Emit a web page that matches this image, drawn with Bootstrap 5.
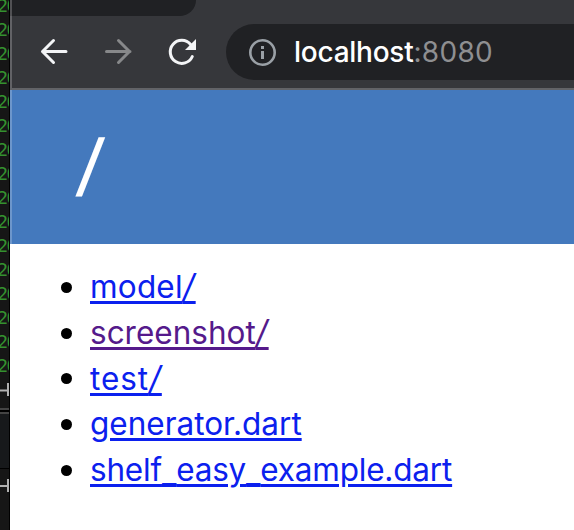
<!DOCTYPE html>
<html lang="en">
<head>
<meta charset="utf-8">
<meta name="viewport" content="width=device-width, initial-scale=1">
<title>Directory listing</title>
<link href="https://cdn.jsdelivr.net/npm/bootstrap@5.3.0/dist/css/bootstrap.min.css" rel="stylesheet">
<style>
body { width: 574px; height: 530px; font-family: Inter, "Liberation Sans", sans-serif; background: #fff; }
.terminal { width: 10px; background: #161616; border-right: 1px solid #000; }
.log { margin: -6px 0 0 -3px; font: 18.5px/24px "DejaVu Sans Mono", monospace; color: #34912f; letter-spacing: -1.6px; height: 384px; white-space: pre; }
.rule-row { height: 30px; }
.pane { height: 57px; background: #17191b; border-top: 2px solid #444; border-bottom: 1px solid #000; }
.divider { height: 4px; border-top: 2px solid #444; background: #000; }
.tabs { height: 16px; background: #36373b; }
.tab-shape { width: 186px; height: 16px; background: #202124; border-bottom-right-radius: 16px; }
.toolbar { height: 74px; background: #36373b; border-bottom: 2px solid #626367; padding-top: 8px; }
.edge { box-shadow: inset 2px 0 rgba(255,255,255,.22); }
.address { height: 56px; margin-left: 25px; border-radius: 28px 0 0 28px; background: #202124; padding-left: 22px; }
.url { font-size: 28px; line-height: 56px; font-weight: 500; color: #fff; margin-left: 17px; letter-spacing: -.25px; }
.port { color: #8e8f91; font-weight: 400; letter-spacing: .3px; }
.banner { height: 154px; background: #4479bd; }
.banner h1 { font-size: 68px; line-height: 148px; font-weight: 500; color: #fff; padding-left: 68px; }
.slash-big { display: inline-block; transform: skewX(-7deg); }
.files { padding: 20px 0 0 80px; font-size: 31.5px; line-height: 45.75px; }
.files li { color: #000; list-style: none; display: flex; align-items: center; height: 45.75px; }
.files li::before { content: ""; width: 11px; height: 11px; border-radius: 50%; background: #000; margin: 1px 18px 0 -29px; }
.files a { color: #0b20ee; text-decoration: underline; text-decoration-thickness: 3px; text-underline-offset: 3px; }
.files a.seen { color: #551a8b; }
.slash { font-style: italic; font-size: 33px; letter-spacing: 1px; }
.spaced { letter-spacing: .2px; }
.wide { letter-spacing: .9px; }
.long { letter-spacing: -.19px; }
.under { vertical-align: -2px; line-height: 1; text-decoration-skip-ink: none; }
</style>
<script src="https://cdn.jsdelivr.net/npm/bootstrap@5.3.0/dist/js/bootstrap.bundle.min.js"></script>
</head>
<body class="d-flex overflow-hidden">
<aside class="terminal overflow-hidden flex-shrink-0 h-100">
<div class="log">20
20
20
20
20
20
20
20
20
20
20
20
20
20
20
20</div>
<svg class="rule-row d-block" width="9" height="30"><path d="M0 12.500H8M8 5V18" stroke="#b0b0b0" stroke-width="2" fill="none"/></svg>
<div class="divider"></div>
<div class="pane"></div>
<svg class="d-block" width="9" height="62"><path d="M0 17H8M8 10V23" stroke="#b0b0b0" stroke-width="2" fill="none"/></svg>
</aside>
<div class="flex-grow-1 overflow-hidden">
<div class="tabs"><div class="tab-shape edge"></div></div>
<nav class="toolbar edge d-flex align-items-start">
<svg class="flex-shrink-0" width="191" height="56" fill="none" stroke-linecap="round" stroke-linejoin="round" stroke-width="3">
<path d="M56 27.500H32.500M43.500 16.500L32.500 27.500L43.500 38.500" stroke="#f3f4f6"/>
<path d="M96.500 27.500H120M108.500 16.500L119.500 27.500L108.500 38.500" stroke="#87888a"/>
<path d="M182.300 32.500A11.500 11.500 0 1 1 180.600 20.500" stroke="#f3f4f6"/>
<path d="M186 15V26H175Z" fill="#f3f4f6"/>
</svg>
<div class="address flex-grow-1 d-flex align-items-center">
<svg width="29" height="29" viewBox="0 0 29 29"><circle cx="14.500" cy="14.500" r="12.200" fill="none" stroke="#9aa0a6" stroke-width="2.600"/><path d="M13 8H16V11H13ZM13 13H16V21H13Z" fill="#9aa0a6"/></svg>
<span class="url">localhost<span class="port">:8080</span></span>
</div>
</nav>
<header class="banner edge"><h1 class="m-0"><span class="slash-big">/</span></h1></header>
<ul class="files m-0">
<li><a href="#model" class="spaced">model<span class="slash">/</span></a></li>
<li><a href="#screenshot" class="seen">screenshot<span class="slash">/</span></a></li>
<li><a href="#test" class="wide">test<span class="slash">/</span></a></li>
<li><a href="#generator">generator.dart</a></li>
<li><a href="#example" class="long">shelf<span class="under">_</span>easy<span class="under">_</span>example.dart</a></li>
</ul>
</div>
</body>
</html>
